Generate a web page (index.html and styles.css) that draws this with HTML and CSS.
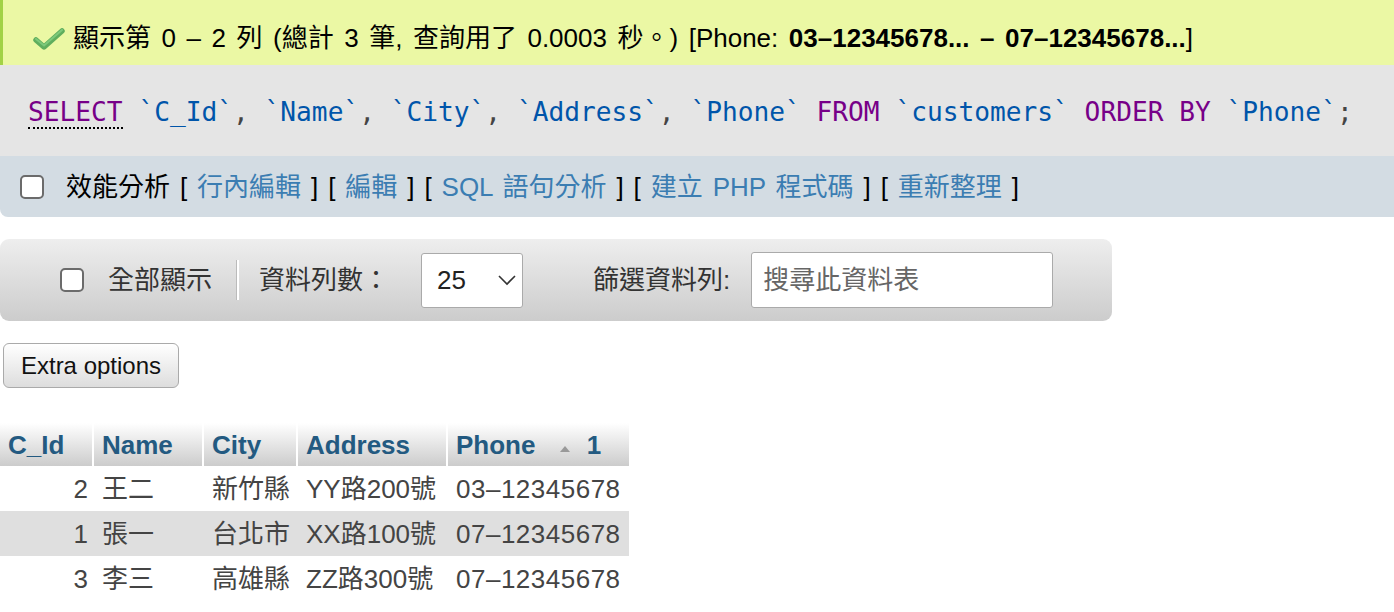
FILE: index.html
```html
<!DOCTYPE html>
<html lang="zh-Hant">
<head>
<meta charset="utf-8">
<title>phpMyAdmin</title>
<link rel="stylesheet" href="styles.css">
</head>
<body>
<div class="success">
  <svg class="check" width="32" height="24" viewBox="0 0 32 24"><path d="M3 13 L11 20 L29 4" fill="none" stroke="#5fae5d" stroke-width="5.5" stroke-linecap="round" stroke-linejoin="round"/><path d="M3 12 L11 18.5 L29 3" fill="none" stroke="#7cc97a" stroke-width="2" stroke-linecap="round" stroke-linejoin="round"/></svg>
  <span class="msg">顯示第 0 – 2 列 (總計 3 筆, 查詢用了 0.0003 秒。) [Phone: <b>03–12345678... – 07–12345678...</b>]</span>
</div>
<div class="sql">
  <code><span class="kw sel">SELECT</span> <span class="id">`C_Id`</span><span class="p">,</span> <span class="id">`Name`</span><span class="p">,</span> <span class="id">`City`</span><span class="p">,</span> <span class="id">`Address`</span><span class="p">,</span> <span class="id">`Phone`</span> <span class="kw">FROM</span> <span class="id">`customers`</span> <span class="kw">ORDER BY</span> <span class="id">`Phone`</span><span class="p">;</span></code>
</div>
<div class="nav">
  <span class="cb"></span>
  <span class="navtext">效能分析 [ <a>行內編輯</a> ] [ <a>編輯</a> ] [ <a>SQL 語句分析</a> ] [ <a>建立 PHP 程式碼</a> ] [ <a>重新整理</a> ]</span>
</div>
<div class="toolbar">
  <span class="cb cb2"></span>
  <span class="lbl">全部顯示</span>
  <span class="sep"></span>
  <span class="lbl">資料列數：</span>
  <span class="select"><span>25</span><svg width="20" height="12" viewBox="0 0 20 12"><polyline points="2,2 10,10 18,2" fill="none" stroke="#333" stroke-width="1.6"/></svg></span>
  <span class="lbl filt">篩選資料列:</span>
  <span class="input">搜尋此資料表</span>
</div>
<div class="btnrow"><span class="btn">Extra options</span></div>
<table class="data">
  <thead>
    <tr><th class="c1">C_Id</th><th class="c2">Name</th><th class="c3">City</th><th class="c4">Address</th><th class="c5">Phone <span class="sort"><svg width="12" height="8" viewBox="0 0 12 8"><polygon points="6,1 11,7 1,7" fill="#999"/></svg></span><span class="sortn">1</span></th></tr>
  </thead>
  <tbody>
    <tr><td class="num">2</td><td>王二</td><td>新竹縣</td><td>YY路200號</td><td class="ph">03–12345678</td></tr>
    <tr class="odd"><td class="num">1</td><td>張一</td><td>台北市</td><td>XX路100號</td><td class="ph">07–12345678</td></tr>
    <tr><td class="num">3</td><td>李三</td><td>高雄縣</td><td>ZZ路300號</td><td class="ph">07–12345678</td></tr>
  </tbody>
</table>
</body>
</html>
```
FILE: styles.css
```css
* { box-sizing: border-box; }
body {
  margin: 0;
  font-family: "Liberation Sans", "Noto Sans CJK TC", sans-serif;
  font-size: 26px;
  color: #000;
  background: #fff;
}
.success {
  height: 65px;
  background: #ebf8a4;
  border-left: 3px solid #a2d246;
  display: flex;
  align-items: center;
  padding: 10px 0 0 30px;
  line-height: 30px;
}
.check { margin-right: 8px; margin-top: 2px; }
.msg { word-spacing: 3.3px; }
.success b { font-weight: bold; }
.sql {
  height: 91px;
  background: #e5e5e5;
  display: flex;
  align-items: center;
  padding: 2px 0 0 28px;
}
.sql code {
  font-family: "DejaVu Sans Mono", monospace;
  font-size: 26.2px;
  line-height: 32px;
  white-space: pre;
}
.kw { color: #770088; }
.sel { border-bottom: 2px dotted #000; }
.id { color: #0055aa; }
.p { color: #444; }
.nav {
  height: 61px;
  background: #d3dce3;
  border-bottom-left-radius: 8px;
  display: flex;
  align-items: center;
  padding-left: 20px;
  line-height: 30px;
}
.cb {
  width: 24px;
  height: 24px;
  border: 2px solid #6b6b6b;
  border-radius: 5px;
  background: #fff;
  flex: none;
}
.navtext { margin-left: 22px; word-spacing: 2.7px; }
.nav a { color: #3b7db2; }
.toolbar {
  margin-top: 22px;
  width: 1112px;
  height: 82px;
  border-radius: 9px;
  background: linear-gradient(#eeeeee, #cccccc);
  display: flex;
  align-items: center;
  padding-left: 60px;
  color: #333;
  line-height: 30px;
}
.cb2 { margin-right: 24px; }
.sep {
  width: 3px;
  height: 40px;
  background: #fff;
  border-left: 1px solid #bbb;
  margin: 0 20px 0 24px;
}
.select {
  margin-left: 32px;
  width: 102px;
  height: 55px;
  background: #fff;
  border: 1px solid #aaa;
  border-radius: 3px;
  display: flex;
  align-items: center;
  justify-content: space-between;
  padding: 0 5px 0 15px;
  color: #222;
}
.filt { margin-left: 70px; }
.input {
  margin-left: 21px;
  width: 302px;
  height: 56px;
  background: #fff;
  border: 1px solid #aaa;
  border-radius: 3px;
  display: flex;
  align-items: center;
  padding-left: 11px;
  color: #666;
}
.btnrow { margin-top: 22px; padding-left: 3px; }
.btn {
  display: inline-flex;
  align-items: center;
  justify-content: center;
  width: 176px;
  height: 45px;
  border: 1px solid #aaa;
  border-radius: 6px;
  background: linear-gradient(#ffffff, #dddddd);
  font-size: 24px;
  color: #111;
}
.data {
  margin-top: 35px;
  border-collapse: separate;
  border-spacing: 0;
  table-layout: fixed;
  width: 629px;
}
.data th {
  height: 43px;
  background: linear-gradient(#ffffff, #cccccc);
  color: #235a81;
  font-weight: bold;
  text-align: left;
  padding: 0 0 0 8px;
  border-right: 2px solid #fff;
  white-space: nowrap;
  line-height: 30px;
}
.data th.c5 { border-right: none; }
.c1 { width: 94px; }
.c2 { width: 110px; }
.c3 { width: 94px; }
.c4 { width: 150px; }
.c5 { width: 181px; }
.sort { margin-left: 16px; vertical-align: 1px; }
.sortn { margin-left: 16px; }
.data td {
  height: 45px;
  padding: 0 0 0 8px;
  color: #444;
  white-space: nowrap;
  line-height: 30px;
}
.data td.ph { letter-spacing: 0.5px; }
.data td.num { text-align: right; padding: 0 6px 0 0; }
.data tr.odd td { background: #dfdfdf; }
```
